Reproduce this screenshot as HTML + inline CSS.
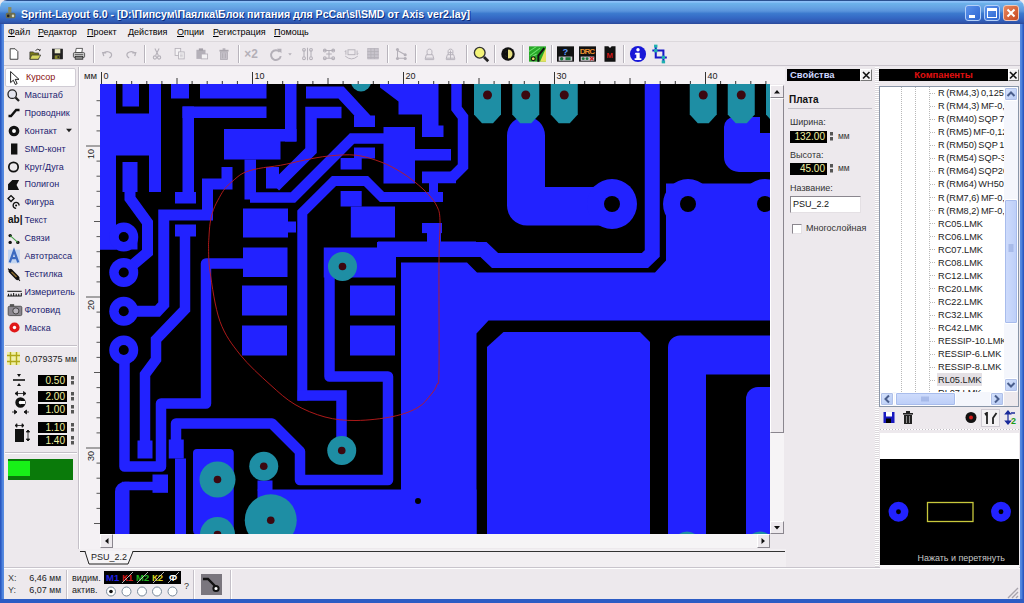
<!DOCTYPE html>
<html lang="ru"><head><meta charset="utf-8"><title>Sprint-Layout 6.0</title>
<style>
*{box-sizing:border-box;margin:0;padding:0}
html,body{width:1024px;height:603px;overflow:hidden;background:#ede9ed;font-family:"Liberation Sans",sans-serif;font-size:9px;line-height:12px;color:#000}
.a{position:absolute}
#title{left:0;top:0;width:1024px;height:24px;background:linear-gradient(#2a5090 0,#2a5090 3%,#8cc0f8 5%,#8cc0f8 9%,#6cb2ea 14%,#66a4e4 30%,#5a94dc 46%,#3c7ace 56%,#3468c4 75%,#3058b0 92%,#2a4898 100%);border-radius:7px 7px 0 0}
#title .t{left:21px;top:8px;color:#fff;font-weight:bold;font-size:10.6px;text-shadow:1px 1px 0 #0a2a7a;white-space:nowrap}
.frame{background:#2c5cc4}
#menu{left:4px;top:24px;width:1016px;height:17px;background:#efecef}
#menu span{position:absolute;top:2px;font-size:9px;white-space:nowrap}
#menu u{text-decoration:underline}
#tb{left:4px;top:41px;width:1016px;height:25px;background:#ede9ed;border-top:1px solid #dcd8dc;border-bottom:1px solid #c9c4cc}
.sep{position:absolute;top:45px;width:2px;height:18px;border-left:1px solid #b8b4bc;border-right:1px solid #fff}
.tool{position:absolute;left:24.500px;font-size:9px;color:#1c1c70;white-space:nowrap}
.ic{position:absolute}
.lbl{position:absolute;font-size:9px;color:#222;white-space:nowrap}
.num{position:absolute;background:#000;color:#f0f0a0;font-size:10px;text-align:right;padding-right:2px;height:11px;line-height:11px}
.row{position:absolute;left:938px;font-size:9.200px;word-spacing:-1px;color:#222;white-space:nowrap;height:13px;line-height:14px}
</style></head><body>
<!-- window frame -->
<div class="a" id="title">
 <svg class="a" style="left:5px;top:7px" width="12" height="13" viewBox="0 0 15 16"><rect x="4" y="0" width="4" height="7" fill="#8a8a5a"/><rect x="1" y="7" width="12" height="7" rx="2" fill="#6d6d4d"/><circle cx="4" cy="11" r="1.6" fill="#222"/><circle cx="10" cy="11" r="1.6" fill="#d8d8c0"/></svg>
 <div class="a t">Sprint-Layout 6.0 - [D:\Пипсум\Паялка\Блок питания для PcCar\sl\SMD от Axis ver2.lay]</div>
 <div class="a" style="left:965px;top:5px;width:16px;height:16px;border:1px solid #b4d0f8;border-radius:3px;background:linear-gradient(135deg,#5a92ec,#2e66d0)"><div class="a" style="left:3px;top:9px;width:6px;height:3px;background:#fff"></div></div>
 <div class="a" style="left:984px;top:5px;width:16px;height:16px;border:1px solid #b4d0f8;border-radius:3px;background:linear-gradient(135deg,#5a92ec,#2e66d0)"><div class="a" style="left:2px;top:2px;width:10px;height:10px;border:1px solid #fff;border-top-width:3px"></div></div>
 <div class="a" style="left:1003px;top:5px;width:16px;height:16px;border:1px solid #f0c8b8;border-radius:3px;background:linear-gradient(135deg,#e8885e,#c84820)"><svg class="a" style="left:2px;top:2px" width="10" height="10"><path d="M1.500 1.500L8.500 8.500M8.500 1.500L1.500 8.500" stroke="#fff" stroke-width="2"/></svg></div>
</div>
<div class="a frame" style="left:0;top:24px;width:4px;height:579px;background:linear-gradient(90deg,#2a58c0 0,#2a58c0 25%,#4a80dc 50%,#5a8ce0 100%)"></div>
<div class="a frame" style="left:1020px;top:24px;width:4px;height:579px;background:linear-gradient(270deg,#2a58c0 0,#2a58c0 25%,#4a80dc 50%,#5a8ce0 100%)"></div>
<div class="a frame" style="left:0;top:599px;width:1024px;height:4px"></div>

<div class="a" id="menu">
 <span style="left:4px"><u>Ф</u>айл</span><span style="left:34px"><u>Р</u>едактор</span><span style="left:83px"><u>П</u>роект</span><span style="left:124px"><u>Д</u>ействия</span><span style="left:173px"><u>О</u>пции</span><span style="left:209px"><u>Р</u>егистрация</span><span style="left:270px"><u>П</u>омощь</span>
</div>
<div class="a" id="tb"></div>
<!-- toolbar separators -->
<div class="sep" style="left:93px"></div><div class="sep" style="left:144px"></div><div class="sep" style="left:238px"></div><div class="sep" style="left:387px"></div><div class="sep" style="left:415px"></div><div class="sep" style="left:466px"></div><div class="sep" style="left:494px"></div><div class="sep" style="left:522px"></div><div class="sep" style="left:551px"></div><div class="sep" style="left:623px"></div>
<!-- toolbar icons -->
<svg class="a" style="left:0;top:41px" width="700" height="25" viewBox="0 41 700 25" font-family="Liberation Sans, sans-serif">
<g transform="translate(14 54) scale(0.7)"><path d="M-5.500 -7.500h7l4 4v11h-11z" fill="#fff" stroke="#222" stroke-width="1.200"/></g>
<g transform="translate(35.5 54) scale(0.7)"><path d="M-8 -3h5l1.500 1.500h6v9h-12.500z" fill="#7a7a18" stroke="#333" stroke-width="1"/><path d="M-5.500 1.500h13l-3.500 6h-12z" fill="#d8d860" stroke="#333" stroke-width="1"/><path d="M0 -5q3.500-4 6.500 0l-1.500 .5M6.500 -5l.3-2" fill="none" stroke="#222" stroke-width="1.200"/></g>
<g transform="translate(57.5 54) scale(0.7)"><rect x="-7" y="-7" width="14" height="14" fill="#222" stroke="#111"/><rect x="-4" y="-7" width="8" height="6" fill="#e8e8c8"/><rect x="-4" y="2" width="7" height="5" fill="#8a8a30"/><rect x="0" y="3" width="2" height="3" fill="#222"/></g>
<g transform="translate(79 54) scale(0.7)"><path d="M-4 -8h9l-1 6h-9z" fill="#fff" stroke="#222"/><rect x="-8" y="-2" width="16" height="7" rx="1.500" fill="#d0d0d0" stroke="#222"/><rect x="-5.500" y="3.500" width="11" height="4" fill="#888" stroke="#222"/><path d="M-6 1h12" stroke="#222"/></g>
<g transform="translate(108 54) scale(0.7)"><path d="M-6 3l-1.500-5 5 .5M-7 -1.500q6-4 11 0q3 4-2 7" fill="none" stroke="#b4b0b8" stroke-width="1.800"/></g>
<g transform="translate(130.5 54) scale(0.7)"><path d="M6 3l1.500-5-5 .5M7 -1.500q-6-4-11 0q-3 4 2 7" fill="none" stroke="#b4b0b8" stroke-width="1.800"/></g>
<g transform="translate(157 54) scale(0.7)"><path d="M-3 -8l5 10M3 -8l-5 10" stroke="#b4b0b8" stroke-width="1.500" fill="none"/><circle cx="-3" cy="5" r="2.300" fill="none" stroke="#b4b0b8" stroke-width="1.500"/><circle cx="3" cy="5" r="2.300" fill="none" stroke="#b4b0b8" stroke-width="1.500"/></g>
<g transform="translate(180 54) scale(0.7)"><rect x="-7" y="-8" width="8" height="10" fill="#f4f2f4" stroke="#b4b0b8" stroke-width="1.200"/><rect x="-2" y="-3" width="8" height="10" fill="#f4f2f4" stroke="#b4b0b8" stroke-width="1.200"/><path d="M0 0h4M0 2h4M0 4h4" stroke="#b4b0b8" stroke-width=".8"/></g>
<g transform="translate(202 54) scale(0.7)"><rect x="-8" y="-6" width="13" height="13" fill="#b4b0b8"/><rect x="-4.500" y="-8" width="6" height="3.500" fill="#a4a0a8"/><rect x="-1" y="0" width="9" height="7" fill="#f4f2f4" stroke="#b4b0b8" stroke-width="1.200"/></g>
<g transform="translate(224 54) scale(0.7)"><rect x="-5" y="-3" width="10" height="11" fill="#c4c0c8" stroke="#aaa6ae"/><rect x="-6.500" y="-6" width="13" height="2.500" fill="#aaa6ae"/><rect x="-2" y="-8" width="4" height="2" fill="#aaa6ae"/><path d="M-2 -1v7M2 -1v7" stroke="#aaa6ae"/></g>
<g transform="translate(252 54) scale(0.7)"><text x="-11" y="6" font-size="17" font-weight="bold" fill="#b4b0b8">×2</text></g>
<g transform="translate(275.5 54) scale(0.7)"><path d="M6 -3a7 7 0 1 0 1.500 6" fill="none" stroke="#b4b0b8" stroke-width="2.800"/><path d="M2 -7.500h6.500v6.500z" fill="#b4b0b8"/></g>
<g transform="translate(290 54) scale(0.7)"><path d="M-2.500 -1h5l-2.500 3z" fill="#b4b0b8"/></g>
<g transform="translate(307.5 54) scale(0.7)"><g stroke="#b4b0b8" fill="none" stroke-width="1.500"><path d="M0 -9v18M-5 -6v10M5 -6v10"/><circle cx="-5" cy="6" r="2"/><circle cx="5" cy="6" r="2"/><circle cx="-5" cy="-6" r="2"/><circle cx="5" cy="-6" r="2"/></g></g>
<g transform="translate(329 54) scale(0.7)"><g stroke="#b4b0b8" fill="none" stroke-width="1.500"><path d="M-7 -5h14M-7 6h14M0 -5v11M-4 0h8"/><circle cx="-6" cy="-5" r="2"/><circle cx="6" cy="-5" r="2"/><circle cx="-6" cy="6" r="2"/><circle cx="6" cy="6" r="2"/></g></g>
<g transform="translate(351.5 54) scale(0.7)"><g stroke="#b4b0b8" fill="none" stroke-width="1.300"><rect x="-5" y="-6" width="10" height="7"/><path d="M-9 3q9 8 18 0M-8 -5v6M8 -5v6M-8 -5l-1.500 2M8 1l1.500-2"/></g></g>
<g transform="translate(373 54) scale(0.7)"><rect x="-7.500" y="-8" width="15" height="15" fill="#c8c4cc" stroke="#b4b0b8"/><path d="M-8 -3.500h16M-8 1h16M-8 5h16M-3 -8v15M2 -8v15" stroke="#b4b0b8" stroke-width="1.200"/></g>
<g transform="translate(401 54) scale(0.7)"><g stroke="#b4b0b8" fill="none" stroke-width="1.500"><path d="M-5 -6v12h11M-5 -5l11 6"/></g><circle cx="-5" cy="-6.500" r="2.200" fill="#b4b0b8"/><circle cx="6" cy="1" r="2.200" fill="#b4b0b8"/><circle cx="-5" cy="6.500" r="2.200" fill="#b4b0b8"/><circle cx="6" cy="6.500" r="2.200" fill="#b4b0b8"/></g>
<g transform="translate(429.5 54) scale(0.7)"><g stroke="#b4b0b8" fill="none" stroke-width="1.300"><path d="M-6 6h12l-1.500-5h-9zM-3 1q-2-8 3-8t3 8M-6 6v2h12v-2"/></g></g>
<g transform="translate(450.5 54) scale(0.7)"><g stroke="#b4b0b8" fill="none" stroke-width="1.300"><path d="M-6 6h12l-1.500-5h-9zM-3 1q-2-8 3-8t3 8M-6 6v2h12v-2M0 -5v12M-3 -2h6"/></g></g>
<g transform="translate(481 54) scale(0.85)"><circle cx="-1.500" cy="-1.500" r="6.300" fill="#f4f478" stroke="#333" stroke-width="1.600"/><path d="M3.500 3.500l5 5" stroke="#222" stroke-width="3.200"/></g>
<g transform="translate(508 54) scale(0.9)"><circle cx="0" cy="0" r="7.500" fill="#111"/><path d="M0 -5a5 5 0 0 1 0 10z" fill="#e8e080"/><circle cx="0" cy="0" r="3.200" fill="#e8e080"/><path d="M0 -3.500a3.500 3.500 0 0 0 0 7z" fill="#111"/></g>
<g transform="translate(537.5 54) scale(0.85)"><rect x="-10" y="-9" width="20" height="18" fill="#28a828"/><path d="M-10 -3l9-6M-9 2l12-9M-6 3l5-3" stroke="#70e070" stroke-width="1.200"/><path d="M3 9h7v-16z" fill="#e8e060"/><path d="M1 9v-7l7-9" stroke="#111" stroke-width="2.400" fill="none"/><circle cx="-5" cy="5.500" r="2.300" fill="#e8e060" stroke="#111" stroke-width="1.200"/></g>
<g transform="translate(565.5 54) scale(0.85)"><rect x="-10" y="-9" width="20" height="18" fill="#111"/><text x="-3.500" y="1" font-size="11" font-weight="bold" fill="#5a9af8">?</text><rect x="-8" y="3" width="16" height="5" fill="#c8c4cc"/><circle cx="-4.500" cy="5.500" r="2" fill="#1a7a3a"/><rect x="0" y="3.800" width="6" height="3.400" fill="#1a7a3a"/></g>
<g transform="translate(587.5 54) scale(0.85)"><rect x="-10" y="-9" width="20" height="18" fill="#111"/><text x="-9" y="0.500" font-size="9.500" font-weight="bold" fill="#e89030" textLength="18">DRC</text><rect x="-8" y="3" width="16" height="5" fill="#c8c4cc"/><circle cx="-5" cy="5.500" r="1.700" fill="#1a7a3a"/><circle cx="-0.500" cy="5.500" r="1.700" fill="#1a7a3a"/><path d="M3 3.500l4 4M7 3.500l-4 4" stroke="#d02020" stroke-width="1.400"/></g>
<g transform="translate(610 54) scale(0.85)"><path d="M-6.500 -9h4.500l2 2l2-2h4.500v18h-13z" fill="#111"/><text x="-4" y="5" font-size="9" font-weight="bold" fill="#d01818">M</text></g>
<g transform="translate(638 54) scale(0.85)"><circle cx="0" cy="0" r="9.500" fill="#1818d8"/><circle cx="0" cy="-5" r="2" fill="#fff"/><path d="M-3 -1.500h5v6.500h2v2h-8v-2h2v-4.500h-2z" fill="#fff"/></g>
<g transform="translate(660 54) scale(0.85)"><path d="M-5 -9v13h13M-9 -4h13v13" fill="none" stroke="#1818c8" stroke-width="2.400"/><rect x="-7" y="-6" width="4" height="4" fill="#20b0b0"/><rect x="2" y="2" width="4" height="4" fill="#20b0b0"/><rect x="-7" y="-11" width="4" height="3.500" fill="#20b0b0"/><rect x="2" y="7.500" width="4" height="3.500" fill="#20b0b0"/></g>
</svg>
<!-- left tool panel -->
<div class="a" style="left:78px;top:67px;width:2px;height:482px;border-left:1px solid #c4c0c8;border-right:1px solid #fff"></div>
<div class="a" style="left:5px;top:68px;width:71px;height:19px;background:#fff;border:1px solid #d0ccd4;border-radius:2px"></div>
<div class="tool" style="top:71px;left:26px;color:#8a1010">Курсор</div>
<div class="tool" style="top:89px">Масштаб</div>
<div class="tool" style="top:107px">Проводник</div>
<div class="tool" style="top:125px">Контакт</div>
<div class="tool" style="top:143px">SMD-конт</div>
<div class="tool" style="top:161px">Круг/Дуга</div>
<div class="tool" style="top:178px">Полигон</div>
<div class="tool" style="top:196px">Фигура</div>
<div class="tool" style="top:214px;left:24.500px">Текст</div>
<div class="tool" style="top:232px;left:24.500px">Связи</div>
<div class="tool" style="top:250px">Автотрасса</div>
<div class="tool" style="top:268px;left:24.500px">Тестилка</div>
<div class="tool" style="top:286px;left:24.500px">Измеритель</div>
<div class="tool" style="top:304px;left:24.500px">Фотовид</div>
<div class="tool" style="top:321.500px;left:24.500px">Маска</div>
<div class="a" style="left:8px;top:214px;font-weight:bold;font-size:10px;color:#111">ab|</div>
<svg class="a" style="left:0;top:66px" width="80" height="275" viewBox="0 66 80 275">
<g transform="translate(14 77.5) scale(0.85)"><path d="M-4 -7v13l3.200-2.800 2.300 5 2.200-1-2.300-5h4.500z" fill="#fff" stroke="#111" stroke-width="1.100"/></g>
<g transform="translate(13.5 95.5) scale(0.85)"><circle cx="-1.500" cy="-1.500" r="5" fill="#e4e4ee" stroke="#222" stroke-width="1.500"/><path d="M2.500 2.500l4 4" stroke="#222" stroke-width="2.600"/></g>
<g transform="translate(14 113) scale(0.85)"><path d="M-6.500 3.500h3l6-7h4" fill="none" stroke="#111" stroke-width="2.800"/></g>
<g transform="translate(14 131) scale(0.85)"><circle cx="0" cy="0" r="4.300" fill="#fff" stroke="#111" stroke-width="4"/></g>
<g transform="translate(69 130.5) scale(0.85)"><path d="M-3.500 -2h7l-3.500 4z" fill="#222"/></g>
<g transform="translate(14 149) scale(0.85)"><rect x="-3.500" y="-6.500" width="7.500" height="13" fill="#111"/></g>
<g transform="translate(13.5 167) scale(0.85)"><circle cx="0" cy="0" r="5.500" fill="none" stroke="#111" stroke-width="2"/></g>
<g transform="translate(14 185) scale(0.85)"><path d="M-7 6v-7l5-5h8l-3 6 3 6z" fill="#111"/></g>
<g transform="translate(14 202) scale(0.85)"><path d="M-7 -4l3.500-3.500 3.500 3.500-3.500 3.500z" fill="none" stroke="#111" stroke-width="1.600"/><path d="M6 4a3.500 3.500 0 1 0-3.500 3.500" fill="none" stroke="#111" stroke-width="1.600"/><circle cx="2.500" cy="4" r="1.200" fill="#111"/></g>
<g transform="translate(14 239) scale(0.85)"><circle cx="-4.500" cy="-4" r="2" fill="#111"/><circle cx="-4.500" cy="4" r="2" fill="#111"/><circle cx="4.500" cy="4" r="2" fill="#111"/><path d="M-4.500 -4l9 8" stroke="#40a040" stroke-width="1.200"/></g>
<g transform="translate(14 256.5) scale(0.85)"><rect x="-7" y="-8" width="14" height="16" fill="#c4d6f0"/><path d="M-5 7l5-14 5 14M-3.500 2h7" fill="none" stroke="#3a6ac0" stroke-width="2.600"/></g>
<g transform="translate(14 274.5) scale(0.85)"><path d="M-7 -7l4 4" stroke="#111" stroke-width="1.400"/><path d="M-4 -4l8 8" stroke="#111" stroke-width="5" stroke-linecap="round"/><path d="M-3 -3l6 6" stroke="#8a6a30" stroke-width="1.800"/><path d="M4 4l3 3.500" stroke="#111" stroke-width="1.200"/></g>
<g transform="translate(14.5 293) scale(0.85)"><path d="M-8.500 -2h17" stroke="#111" stroke-width="1.200"/><path d="M-8.500 3.500h17M-7 1v2.500M-4 1v2.500M-1 0v3.500M2 1v2.500M5 1v2.500M8 0v3.500" stroke="#111" stroke-width="1.200"/></g>
<g transform="translate(15 310.5) scale(0.85)"><rect x="-8" y="-5" width="16" height="11" rx="1.500" fill="#8a868e" stroke="#444"/><rect x="-6" y="-7.500" width="5" height="3" fill="#555"/><circle cx="1" cy="0.500" r="3.600" fill="#b8b4bc" stroke="#333"/></g>
<g transform="translate(14.5 327.5) scale(0.85)"><circle cx="0" cy="0" r="6" fill="#e01818"/><circle cx="0" cy="0" r="2" fill="#fff"/></g>
</svg>
<div class="a" style="left:5px;top:345px;width:72px;height:2px;border-top:1px solid #c4c0c8;border-bottom:1px solid #fff"></div>
<svg class="a" style="left:7px;top:352px" width="13" height="13" viewBox="0 0 13 13"><rect width="13" height="13" fill="#f0f0a8"/><path d="M3.500 0v13M9.500 0v13M0 3.500h13M0 9.500h13" stroke="#b0a818" stroke-width="1.400"/></svg>
<div class="lbl" style="left:25px;top:353px">0,079375 <span style="font-size:8.5px">мм</span></div>
<div class="num" style="left:38px;top:375px;width:29px">0.50</div>
<div class="num" style="left:38px;top:391px;width:29px">2.00</div>
<div class="num" style="left:38px;top:404px;width:29px">1.00</div>
<div class="num" style="left:38px;top:422px;width:29px">1.10</div>
<div class="num" style="left:38px;top:435px;width:29px">1.40</div>
<svg class="a" style="left:0;top:370px" width="80" height="80" viewBox="0 370 80 80">
 <g fill="#555"><rect x="71" y="376" width="3" height="3.500"/><rect x="71" y="381" width="3" height="3.500"/><rect x="71" y="392" width="3" height="3.500"/><rect x="71" y="397" width="3" height="3.500"/><rect x="71" y="405" width="3" height="3.500"/><rect x="71" y="410" width="3" height="3.500"/><rect x="71" y="423" width="3" height="3.500"/><rect x="71" y="428" width="3" height="3.500"/><rect x="71" y="436" width="3" height="3.500"/><rect x="71" y="441" width="3" height="3.500"/></g>
 <path d="M13 380h12" stroke="#111" stroke-width="1.600"/><path d="M17 374h4l-2 3zM17 386h4l-2-3z" fill="#111"/>
 <circle cx="20.500" cy="402.500" r="3.500" fill="#fff" stroke="#111" stroke-width="3.400"/><path d="M20 401h5v3h-5z" fill="#fff"/>
 <path d="M15 393.500h11M15 393.500l2.500-2v4zM26 393.500l-2.500-2v4z" stroke="#111" fill="#111" stroke-width=".8"/>
 <path d="M12 412h5M24 412h5M17 412l-2.500-2v4zM24 412l2.500-2v4z" stroke="#111" fill="#111" stroke-width=".8"/>
 <rect x="15" y="429" width="9" height="13" fill="#111"/><path d="M15 425.500h9M15 425.500l2-1.800v3.600zM24 425.500l-2-1.800v3.600z" stroke="#111" fill="#111" stroke-width=".8"/><path d="M28 430v11M28 430l-1.800 2h3.600zM28 441l-1.800-2h3.600z" stroke="#111" fill="#111" stroke-width=".8"/>
</svg>
<div class="a" style="left:5px;top:452px;width:72px;height:2px;border-top:1px solid #c4c0c8;border-bottom:1px solid #fff"></div>
<div class="a" style="left:8px;top:459px;width:65px;height:21px;background:#0a7a0a"></div>
<div class="a" style="left:8px;top:461px;width:22px;height:15px;background:#18f018"></div>
<!-- rulers -->
<svg class="a" style="left:80px;top:67px" width="705" height="482" viewBox="80 67 705 482" font-family="Liberation Sans, sans-serif" font-size="9" fill="#222">
<rect x="80" y="67" width="705" height="17" fill="#f4f1f4"/><rect x="80" y="67" width="20" height="482" fill="#f4f1f4"/>
<text x="84" y="79" font-size="9.500">мм</text>
<text x="103.5" y="78.500">0</text>
<text x="254.5" y="78.500">10</text>
<text x="405.5" y="78.500">20</text>
<text x="556.5" y="78.500">30</text>
<text x="707.5" y="78.500">40</text>
<text transform="translate(94 149.0) rotate(-90)" text-anchor="end">10</text>
<text transform="translate(94 300.0) rotate(-90)" text-anchor="end">20</text>
<text transform="translate(94 451.0) rotate(-90)" text-anchor="end">30</text>
<path d="M101.5 72v12M116.6 81v3M131.7 81v3M146.8 81v3M161.9 81v3M177.0 78v6M192.1 81v3M207.2 81v3M222.3 81v3M237.4 81v3M252.5 72v12M267.6 81v3M282.7 81v3M297.8 81v3M312.9 81v3M328.0 78v6M343.1 81v3M358.2 81v3M373.3 81v3M388.4 81v3M403.5 72v12M418.6 81v3M433.7 81v3M448.8 81v3M463.9 81v3M479.0 78v6M494.1 81v3M509.2 81v3M524.3 81v3M539.4 81v3M554.5 72v12M569.6 81v3M584.7 81v3M599.8 81v3M614.9 81v3M630.0 78v6M645.1 81v3M660.2 81v3M675.3 81v3M690.4 81v3M705.5 72v12M720.6 81v3M735.7 81v3M750.8 81v3M765.9 81v3" stroke="#333" stroke-width="1" fill="none"/>
<path d="M96.500 100.7h3.500M96.500 115.8h3.500M96.500 130.9h3.500M86 146.0h14M96.500 161.1h3.500M96.500 176.2h3.500M96.500 191.3h3.500M96.500 206.4h3.500M94 221.5h6M96.500 236.6h3.500M96.500 251.7h3.500M96.500 266.8h3.500M96.500 281.9h3.500M86 297.0h14M96.500 312.1h3.500M96.500 327.2h3.500M96.500 342.3h3.500M96.500 357.4h3.500M94 372.5h6M96.500 387.6h3.500M96.500 402.7h3.500M96.500 417.8h3.500M96.500 432.9h3.500M86 448.0h14M96.500 463.1h3.500M96.500 478.2h3.500M96.500 493.3h3.500M96.500 508.4h3.500M94 523.5h6" stroke="#555" stroke-width="1" fill="none"/>
</svg>
<svg class="a" style="left:100px;top:83.500px" width="670" height="450.500" viewBox="100 83.500 670 450.500">
<rect x="100" y="83.500" width="670" height="450.500" fill="#000"/>
<g fill="#2222ff">
<rect x="100" y="83.5" width="16" height="165.5"/>
<rect x="122.5" y="83.5" width="16.5" height="22.5"/>
<rect x="100" y="113" width="61" height="42"/>
<rect x="149" y="83.5" width="12" height="108"/>
<rect x="171" y="83.5" width="18" height="14.5"/>
<rect x="200" y="83.5" width="66.5" height="14.5"/>
<rect x="285" y="83.5" width="11.5" height="57.5"/>
<rect x="280" y="128.5" width="16.5" height="12.5"/>
<path d="M306 92L341 92L366 119" fill="none" stroke="#2222ff" stroke-width="12" stroke-linecap="butt" stroke-linejoin="miter"/>
<rect x="354" y="115" width="21" height="11.5"/>
<rect x="182.5" y="106" width="84" height="11.5"/>
<rect x="182.5" y="106" width="11.5" height="95"/>
<rect x="175" y="191.5" width="21" height="11.5"/>
<rect x="224" y="128.5" width="56.5" height="30.5"/>
<rect x="244.5" y="159" width="11.5" height="40"/>
<path d="M250 197L293 197L352 138L386 138" fill="none" stroke="#2222ff" stroke-width="10.5" stroke-linecap="butt" stroke-linejoin="miter"/>
<path d="M341.5 112L311 112L311 150L275 186" fill="none" stroke="#2222ff" stroke-width="11.5" stroke-linecap="butt" stroke-linejoin="miter"/>
<rect x="266" y="166.5" width="13" height="21.5"/>
<path d="M302.3 400L302.3 212L334 180.5L366 180.5L382 196.5L443 196.5" fill="none" stroke="#2222ff" stroke-width="10" stroke-linecap="butt" stroke-linejoin="miter"/>
<path d="M297.5 395L341.5 395L341.5 450" fill="none" stroke="#2222ff" stroke-width="10.5" stroke-linecap="butt" stroke-linejoin="miter"/>
<path d="M123.75 310.75L157.5 310.75L163.75 304L163.75 214.5L207.5 214.5L207.5 183.5L227 183.5L227 166.5" fill="none" stroke="#2222ff" stroke-width="11" stroke-linecap="butt" stroke-linejoin="miter"/>
<rect x="175" y="224" width="21" height="12"/>
<path d="M185 230L185 309L156 339L156 359L145 374L145 442" fill="none" stroke="#2222ff" stroke-width="10.5" stroke-linecap="butt" stroke-linejoin="miter"/>
<rect x="137.5" y="440" width="15" height="18"/>
<rect x="243" y="208" width="45" height="29"/>
<rect x="288" y="221" width="8" height="11"/>
<rect x="122.5" y="161.5" width="15" height="30"/>
<path d="M130 190L130 198L147.5 222L147.5 252L123.75 272" fill="none" stroke="#2222ff" stroke-width="11" stroke-linecap="butt" stroke-linejoin="miter"/>
<rect x="100" y="234" width="37.5" height="15"/>
<circle cx="123.75" cy="236.5" r="14.5"/>
<circle cx="123.75" cy="272" r="14.5"/>
<circle cx="123.75" cy="310.75" r="14.5"/>
<circle cx="123.75" cy="349.5" r="14.5"/>
<path d="M380 83.5L438.5 83.5L438.5 125L443.5 125L443.5 136.5L422 136.5L422 114L398.5 114L398.5 101L380 87z"/>
<rect x="383.5" y="126.5" width="31.5" height="56.5"/>
<rect x="415" y="148.5" width="36" height="11.5"/>
<rect x="354" y="147" width="21" height="11"/>
<rect x="340.6" y="157.5" width="21.1" height="11.5"/>
<rect x="422" y="171" width="34" height="11.75"/>
<rect x="429" y="182" width="9" height="10"/>
<path d="M456.5 83.5L456.5 108L463 116.5L463 166L451 178" fill="none" stroke="#2222ff" stroke-width="10.5" stroke-linecap="butt" stroke-linejoin="miter"/>
<rect x="350.8" y="206" width="44.2" height="31"/>
<rect x="340.6" y="190.5" width="21.1" height="15.5"/>
<rect x="422" y="222.5" width="20" height="10.1"/>
<rect x="427" y="232" width="14" height="11"/>
<path d="M507 135a19 19 0 0 1 38 0V186.500H612V225H527a20 20 0 0 1-20-20z"/>
<circle cx="612" cy="203.5" r="25"/>
<path d="M377 249L483.5 249L495 260L645 260L652.25 253L652.25 83.5" fill="none" stroke="#2222ff" stroke-width="15" stroke-linecap="butt" stroke-linejoin="miter"/>
<path d="M734 116.500H760V132.500H770V171.500H739a15 15 0 0 1-15-15V126.500a10 10 0 0 1 10-10z"/>
<circle cx="688" cy="203.5" r="25"/>
<circle cx="765" cy="203.5" r="25"/>
<path d="M401 262L467 262L477 272L655 272L666 260L666 183L770 183L770 320L488.5 320L476.5 333L476.5 534L401 534z"/>
<path d="M503.5 331.5L640 331.5L650 341.5L650 534L487 534L487 346.5z"/>
<path d="M668 347a12 12 0 0 1 12-12H770V374H706V534H668z"/>
<path d="M746 398.500a12 12 0 0 1 12-12H770V534H746z"/>
<rect x="323.75" y="247" width="72.25" height="30"/>
<rect x="378" y="241" width="98" height="9"/>
<rect x="350" y="285" width="45" height="30"/>
<rect x="350" y="325" width="45" height="30"/>
<path d="M329.5 270L329.5 376L388 376L388 479.5L300 479.5L300 451L272 423L176 423L176 445" fill="none" stroke="#2222ff" stroke-width="10.5" stroke-linecap="butt" stroke-linejoin="round"/>
<rect x="168.75" y="439" width="15" height="19"/>
<path d="M180.5 458L180.5 534" fill="none" stroke="#2222ff" stroke-width="11" stroke-linecap="butt" stroke-linejoin="miter"/>
<rect x="243" y="247" width="44.5" height="29.5"/>
<rect x="242" y="285" width="45" height="30"/>
<rect x="242" y="325" width="45" height="30"/>
<path d="M124.5 349.5L124.5 466L161 466L161 403L206 403L206 263L244 263" fill="none" stroke="#2222ff" stroke-width="10.5" stroke-linecap="butt" stroke-linejoin="round"/>
<rect x="152.5" y="474" width="15.5" height="18.3"/>
<path d="M160 485.5L122 485.5" fill="none" stroke="#2222ff" stroke-width="8.5" stroke-linecap="butt" stroke-linejoin="round"/>
<path d="M115 491a10 10 0 0 1 10-9.750h4.500V534H115z"/>
<rect x="193" y="448.5" width="40.75" height="85.5" rx="4"/>
<rect x="257.5" y="480" width="15" height="10"/>
<rect x="257.5" y="489" width="219" height="45"/>
</g>
<circle cx="123.75" cy="236.5" r="5" fill="#000"/>
<circle cx="123.75" cy="272" r="5" fill="#000"/>
<circle cx="123.75" cy="310.75" r="5" fill="#000"/>
<circle cx="123.75" cy="349.5" r="5" fill="#000"/>
<circle cx="612" cy="203.5" r="8" fill="#000"/>
<circle cx="688" cy="203.5" r="8" fill="#000"/>
<circle cx="765" cy="203.5" r="8" fill="#000"/>
<circle cx="418" cy="500.5" r="3" fill="#000"/>
<g fill="#1e8ea4">
<circle cx="361" cy="81" r="10" fill="#1e8ea4"/>
<path d="M474 83.5L501 83.5L501 114L493 122.75L482 122.75L474 114z" fill="#1e8ea4"/>
<path d="M512.25 83.5L539.25 83.5L539.25 114L531.25 122.75L520.25 122.75L512.25 114z" fill="#1e8ea4"/>
<path d="M550.75 83.5L577.75 83.5L577.75 114L569.75 122.75L558.75 122.75L550.75 114z" fill="#1e8ea4"/>
<path d="M689.75 83.5L716.75 83.5L716.75 114L708.75 122.75L697.75 122.75L689.75 114z" fill="#1e8ea4"/>
<path d="M727.75 83.5L754.75 83.5L754.75 114L746.75 122.75L735.75 122.75L727.75 114z" fill="#1e8ea4"/>
<path d="M766 83.5L793 83.5L793 114L785 122.75L774 122.75L766 114z" fill="#1e8ea4"/>
<circle cx="342.5" cy="266" r="14.5" fill="#1e8ea4"/>
<circle cx="341.75" cy="450" r="14.5" fill="#1e8ea4"/>
<circle cx="217.5" cy="479" r="18" fill="#1e8ea4"/>
<circle cx="217.5" cy="534" r="17.5" fill="#1e8ea4"/>
<circle cx="263.75" cy="465.75" r="14.5" fill="#1e8ea4"/>
<circle cx="270.75" cy="519.75" r="26" fill="#1e8ea4"/>
<circle cx="687" cy="545" r="14" fill="#1e8ea4"/>
<circle cx="760" cy="545" r="14" fill="#1e8ea4"/>
</g>
<g fill="#3c0810">
<circle cx="487.5" cy="94.5" r="4.5" fill="#3c0810"/>
<circle cx="525.75" cy="94.5" r="4.5" fill="#3c0810"/>
<circle cx="564.25" cy="94.5" r="4.5" fill="#3c0810"/>
<circle cx="703.25" cy="94.5" r="4.5" fill="#3c0810"/>
<circle cx="741.25" cy="94.5" r="4.5" fill="#3c0810"/>
<circle cx="342.5" cy="266" r="3.8" fill="#3c0810"/>
<circle cx="341.75" cy="450" r="3.8" fill="#3c0810"/>
<circle cx="217.5" cy="479" r="3.8" fill="#3c0810"/>
<circle cx="263.75" cy="465.75" r="3.8" fill="#3c0810"/>
<circle cx="270.75" cy="519.75" r="3.8" fill="#3c0810"/>
<circle cx="217.5" cy="534" r="3.8" fill="#3c0810"/>
</g>
<path d="M208.5 243.75C208.8 240.4 209.2 229.2 210.0 223.4C210.8 217.6 211.9 213.4 213.5 209.0C215.1 204.6 217.5 200.4 219.4 196.9C221.3 193.4 222.9 190.6 225.0 188.0C227.1 185.4 229.0 183.8 232.0 181.2C235.0 178.7 238.6 174.9 243.0 172.7C247.4 170.5 252.3 169.3 258.5 168.0C264.7 166.7 272.6 166.2 280.4 164.8C288.2 163.4 297.3 161.0 305.4 159.4C313.5 157.8 320.4 156.3 328.8 155.5C337.2 154.7 347.3 153.7 356.0 154.7C364.7 155.7 373.7 158.8 381.0 161.5C388.3 164.2 394.4 167.7 400.0 171.0C405.6 174.3 410.0 177.7 414.8 181.5C419.5 185.3 424.8 189.9 428.5 194.0C432.2 198.1 435.1 201.7 437.0 206.0C438.9 210.3 439.7 211.0 440.0 220.0C440.3 229.0 439.2 235.0 439.0 260.0C438.8 285.0 439.3 349.3 439.0 370.0C438.7 390.7 438.3 380.0 437.0 384.0C435.7 388.0 434.2 390.2 431.0 394.0C427.8 397.8 424.3 403.3 418.0 407.0C411.7 410.7 403.3 413.8 393.0 416.0C382.7 418.2 367.3 419.9 356.0 420.0C344.7 420.1 335.2 419.2 325.0 416.5C314.8 413.8 304.2 409.4 295.0 404.0C285.8 398.6 279.2 392.3 270.0 384.0C260.8 375.7 248.3 364.5 240.0 354.0C231.7 343.5 225.0 334.8 220.0 321.0C215.0 307.2 211.9 283.9 210.0 271.0C208.1 258.1 208.8 248.3 208.5 243.8" fill="none" stroke="#c01c1c" stroke-width="0.9"/>
</svg>
<!-- scrollbars -->
<div class="a" style="left:770px;top:85px;width:14px;height:449px;background:#f6f4f6"></div>
<div class="a" style="left:770px;top:85px;width:14px;height:13px;background:#ede9ed;border:1px solid #fff;border-right-color:#8a868e;border-bottom-color:#8a868e"></div>
<div class="a" style="left:770px;top:98px;width:14px;height:335px;background:#ede9ed;border:1px solid #fff;border-right-color:#8a868e;border-bottom-color:#8a868e"></div>
<div class="a" style="left:770px;top:521px;width:14px;height:13px;background:#ede9ed;border:1px solid #fff;border-right-color:#8a868e;border-bottom-color:#8a868e"></div>
<div class="a" style="left:100px;top:534px;width:670px;height:14px;background:#f6f4f6"></div>
<div class="a" style="left:100px;top:534px;width:13px;height:14px;background:#ede9ed;border:1px solid #fff;border-right-color:#8a868e;border-bottom-color:#8a868e"></div>
<div class="a" style="left:757px;top:534px;width:13px;height:14px;background:#ede9ed;border:1px solid #fff;border-right-color:#8a868e;border-bottom-color:#8a868e"></div>
<div class="a" style="left:770px;top:534px;width:15px;height:14px;background:#ede9ed"></div>
<svg class="a" style="left:100px;top:85px" width="690" height="465" viewBox="100 85 690 465"><path d="M774 93.500h6l-3-3.500zM774 526h6l-3 3.500zM108.500 538v6l-3.500-3zM761.500 538v6l3.500-3z" fill="#111"/></svg>
<!-- tab strip -->
<div class="a" style="left:80px;top:549px;width:706px;height:19px;background:#f2eff2"></div>
<div class="a" style="left:80px;top:551px;width:705px;height:1px;background:#333"></div>
<svg class="a" style="left:80px;top:549px" width="60" height="17" viewBox="80 549 60 17"><path d="M80 551.500h5l4 12.500h39l5-12.500h7" fill="#f6f4f6" stroke="#222" stroke-width="1"/><path d="M86 551.500h46" stroke="#f6f4f6" stroke-width="1.500"/></svg>
<div class="a" style="left:91px;top:551px;font-size:9px;color:#222">PSU_2.2</div>
<!-- status bar -->
<div class="a" style="left:4px;top:567px;width:1016px;height:2px;border-top:1px solid #c8c4cc;border-bottom:1px solid #fff"></div>
<div class="a" style="left:66px;top:570px;width:2px;height:29px;border-left:1px solid #c4c0c8;border-right:1px solid #fff"></div>
<div class="a" style="left:193px;top:570px;width:2px;height:29px;border-left:1px solid #c4c0c8;border-right:1px solid #fff"></div>
<div class="a" style="left:230px;top:570px;width:2px;height:29px;border-left:1px solid #c4c0c8;border-right:1px solid #fff"></div>
<div class="lbl" style="left:8px;top:572px;color:#444">X:</div><div class="lbl" style="left:8px;top:584px;color:#444">Y:</div>
<div class="lbl" style="left:27px;top:572px;width:34px;text-align:right">6,46 <span style="font-size:8.5px">мм</span></div>
<div class="lbl" style="left:27px;top:584px;width:34px;text-align:right">6,07 <span style="font-size:8.5px">мм</span></div>
<div class="lbl" style="left:72px;top:572px">видим.</div><div class="lbl" style="left:72px;top:584px">актив.</div>
<div class="a" style="left:104px;top:571px;width:77px;height:13px;background:#000"></div>
<svg class="a" style="left:100px;top:570px" width="130" height="30" viewBox="100 570 130 30" font-family="Liberation Sans, sans-serif" font-size="9.500" font-weight="bold">
 <text x="106" y="581" fill="#2020e0">М1</text><text x="122" y="581" fill="#d01818">К1</text><path d="M122 583l11-11" stroke="#ddd" stroke-width=".8"/>
 <text x="136" y="581" fill="#20b020">М2</text><path d="M137 583l11-11" stroke="#ddd" stroke-width=".8"/>
 <text x="152" y="581" fill="#d8d020">К2</text><path d="M153 583l11-11" stroke="#ddd" stroke-width=".8"/>
 <text x="169" y="581" fill="#fff">Ф</text><path d="M168 583l11-11" stroke="#ddd" stroke-width=".8"/>
 <g fill="#fff" stroke="#7a8a9a" stroke-width="1"><circle cx="111" cy="591.500" r="4.500"/><circle cx="126.500" cy="591.500" r="4.500"/><circle cx="142" cy="591.500" r="4.500"/><circle cx="157" cy="591.500" r="4.500"/><circle cx="172.500" cy="591.500" r="4.500"/></g><circle cx="111" cy="591.500" r="1.800" fill="#111"/>
 <text x="184" y="589" font-size="9" font-weight="normal" fill="#333">?</text>
 <rect x="201" y="574" width="21" height="21" fill="#7a767e"/><path d="M203 579h5l8 8" fill="none" stroke="#111" stroke-width="2.400"/><circle cx="216" cy="588.500" r="2.600" fill="#fff" stroke="#111" stroke-width="2"/>
</svg>
<!-- properties panel -->
<div class="a" style="left:787px;top:68.500px;width:73px;height:12.500px;background:#000"></div>
<div class="a" style="left:790px;top:67.500px;font-size:9.400px;font-weight:bold;color:#d0d8ff;line-height:14px">Свойства</div>
<div class="a" style="left:860px;top:68.500px;width:12px;height:12.500px;background:#f4f2f4;border:1px solid #fff;border-right-color:#777;border-bottom-color:#777"></div>
<svg class="a" style="left:862px;top:71px" width="9" height="9"><path d="M1 1l6.500 6.500M7.500 1L1 7.500" stroke="#111" stroke-width="1.600"/></svg>
<div class="a" style="left:789px;top:94px;font-size:10px;font-weight:bold;color:#111">Плата</div>
<div class="a" style="left:788px;top:108px;width:84px;height:1px;background:#c4c0c8"></div>
<div class="lbl" style="left:790px;top:116px;color:#333">Ширина:</div>
<div class="num" style="left:790px;top:130.500px;width:37px;height:12px;line-height:12px">132.00</div>
<div class="lbl" style="left:838px;top:130px;font-size:8.5px;color:#333">мм</div>
<div class="lbl" style="left:790px;top:149px;color:#333">Высота:</div>
<div class="num" style="left:790px;top:162.500px;width:37px;height:12px;line-height:12px">45.00</div>
<div class="lbl" style="left:838px;top:162px;font-size:8.5px;color:#333">мм</div>
<div class="lbl" style="left:790px;top:182px;color:#333">Название:</div>
<div class="a" style="left:790px;top:196px;width:71px;height:17px;background:#fff;border:1px solid #8a868e;border-right-color:#e4e0e4;border-bottom-color:#e4e0e4"></div>
<div class="lbl" style="left:793px;top:198px;color:#111">PSU_2.2</div>
<div class="a" style="left:792px;top:223.500px;width:10px;height:10px;background:#fff;border:1px solid #8a868e;border-right-color:#e4e0e4;border-bottom-color:#e4e0e4"></div>
<div class="lbl" style="left:806px;top:222px;color:#333">Многослойная</div>
<svg class="a" style="left:829px;top:131px" width="6" height="45"><g fill="#555"><rect x="1" y="1" width="3" height="3.500"/><rect x="1" y="6" width="3" height="3.500"/><rect x="1" y="33" width="3" height="3.500"/><rect x="1" y="38" width="3" height="3.500"/></g></svg>
<div class="a" style="left:875px;top:67px;width:4px;height:500px;background:repeating-linear-gradient(#fff 0 1px,#dcd8dc 1px 2px)"></div>
<!-- components panel -->
<div class="a" style="left:879px;top:68.500px;width:129px;height:12.500px;background:#000"></div>
<div class="a" style="left:879px;top:67.500px;width:129px;text-align:center;font-size:9.400px;font-weight:bold;color:#e01010;line-height:14px">Компаненты</div>
<div class="a" style="left:1008px;top:68.500px;width:11px;height:12.500px;background:#f4f2f4;border:1px solid #fff;border-right-color:#777;border-bottom-color:#777"></div>
<svg class="a" style="left:1009px;top:71px" width="9" height="9"><path d="M1 1l6.500 6.500M7.500 1L1 7.500" stroke="#111" stroke-width="1.600"/></svg>
<div class="a" style="left:879px;top:86px;width:140px;height:321px;background:#fff;border:1px solid #8a96a8;overflow:hidden"></div>
<div class="a" style="left:880px;top:87px;width:124px;height:305px;overflow:hidden">
<div class="a" style="left:21px;top:0;width:1px;height:305px;background:repeating-linear-gradient(#b8b8b8 0 1px,#fff 1px 2px)"></div><div class="a" style="left:35px;top:0;width:1px;height:305px;background:repeating-linear-gradient(#b8b8b8 0 1px,#fff 1px 2px)"></div><div class="a" style="left:49px;top:0;width:1px;height:305px;background:repeating-linear-gradient(#b8b8b8 0 1px,#fff 1px 2px)"></div>
<div class="a" style="left:50px;top:5.5px;width:6px;height:1px;background:repeating-linear-gradient(90deg,#b8b8b8 0 1px,#fff 1px 2px)"></div><div class="row" style="left:57px;top:-1.0px;padding:0 1px">R (RM4,3) 0,125W</div>
<div class="a" style="left:50px;top:18.6px;width:6px;height:1px;background:repeating-linear-gradient(90deg,#b8b8b8 0 1px,#fff 1px 2px)"></div><div class="row" style="left:57px;top:12.1px;padding:0 1px">R (RM4,3) MF-0,25</div>
<div class="a" style="left:50px;top:31.6px;width:6px;height:1px;background:repeating-linear-gradient(90deg,#b8b8b8 0 1px,#fff 1px 2px)"></div><div class="row" style="left:57px;top:25.1px;padding:0 1px">R (RM40) SQP 7</div>
<div class="a" style="left:50px;top:44.7px;width:6px;height:1px;background:repeating-linear-gradient(90deg,#b8b8b8 0 1px,#fff 1px 2px)"></div><div class="row" style="left:57px;top:38.2px;padding:0 1px">R (RM5) MF-0,125</div>
<div class="a" style="left:50px;top:57.7px;width:6px;height:1px;background:repeating-linear-gradient(90deg,#b8b8b8 0 1px,#fff 1px 2px)"></div><div class="row" style="left:57px;top:51.2px;padding:0 1px">R (RM50) SQP 10</div>
<div class="a" style="left:50px;top:70.8px;width:6px;height:1px;background:repeating-linear-gradient(90deg,#b8b8b8 0 1px,#fff 1px 2px)"></div><div class="row" style="left:57px;top:64.3px;padding:0 1px">R (RM54) SQP-3</div>
<div class="a" style="left:50px;top:83.9px;width:6px;height:1px;background:repeating-linear-gradient(90deg,#b8b8b8 0 1px,#fff 1px 2px)"></div><div class="row" style="left:57px;top:77.4px;padding:0 1px">R (RM64) SQP20</div>
<div class="a" style="left:50px;top:96.9px;width:6px;height:1px;background:repeating-linear-gradient(90deg,#b8b8b8 0 1px,#fff 1px 2px)"></div><div class="row" style="left:57px;top:90.4px;padding:0 1px">R (RM64) WH50</div>
<div class="a" style="left:50px;top:110.0px;width:6px;height:1px;background:repeating-linear-gradient(90deg,#b8b8b8 0 1px,#fff 1px 2px)"></div><div class="row" style="left:57px;top:103.5px;padding:0 1px">R (RM7,6) MF-0,25</div>
<div class="a" style="left:50px;top:123.0px;width:6px;height:1px;background:repeating-linear-gradient(90deg,#b8b8b8 0 1px,#fff 1px 2px)"></div><div class="row" style="left:57px;top:116.5px;padding:0 1px">R (RM8,2) MF-0,25</div>
<div class="a" style="left:50px;top:136.1px;width:6px;height:1px;background:repeating-linear-gradient(90deg,#b8b8b8 0 1px,#fff 1px 2px)"></div><div class="row" style="left:57px;top:129.6px;padding:0 1px">RC05.LMK</div>
<div class="a" style="left:50px;top:149.2px;width:6px;height:1px;background:repeating-linear-gradient(90deg,#b8b8b8 0 1px,#fff 1px 2px)"></div><div class="row" style="left:57px;top:142.7px;padding:0 1px">RC06.LMK</div>
<div class="a" style="left:50px;top:162.2px;width:6px;height:1px;background:repeating-linear-gradient(90deg,#b8b8b8 0 1px,#fff 1px 2px)"></div><div class="row" style="left:57px;top:155.7px;padding:0 1px">RC07.LMK</div>
<div class="a" style="left:50px;top:175.3px;width:6px;height:1px;background:repeating-linear-gradient(90deg,#b8b8b8 0 1px,#fff 1px 2px)"></div><div class="row" style="left:57px;top:168.8px;padding:0 1px">RC08.LMK</div>
<div class="a" style="left:50px;top:188.3px;width:6px;height:1px;background:repeating-linear-gradient(90deg,#b8b8b8 0 1px,#fff 1px 2px)"></div><div class="row" style="left:57px;top:181.8px;padding:0 1px">RC12.LMK</div>
<div class="a" style="left:50px;top:201.4px;width:6px;height:1px;background:repeating-linear-gradient(90deg,#b8b8b8 0 1px,#fff 1px 2px)"></div><div class="row" style="left:57px;top:194.9px;padding:0 1px">RC20.LMK</div>
<div class="a" style="left:50px;top:214.5px;width:6px;height:1px;background:repeating-linear-gradient(90deg,#b8b8b8 0 1px,#fff 1px 2px)"></div><div class="row" style="left:57px;top:208.0px;padding:0 1px">RC22.LMK</div>
<div class="a" style="left:50px;top:227.5px;width:6px;height:1px;background:repeating-linear-gradient(90deg,#b8b8b8 0 1px,#fff 1px 2px)"></div><div class="row" style="left:57px;top:221.0px;padding:0 1px">RC32.LMK</div>
<div class="a" style="left:50px;top:240.6px;width:6px;height:1px;background:repeating-linear-gradient(90deg,#b8b8b8 0 1px,#fff 1px 2px)"></div><div class="row" style="left:57px;top:234.1px;padding:0 1px">RC42.LMK</div>
<div class="a" style="left:50px;top:253.6px;width:6px;height:1px;background:repeating-linear-gradient(90deg,#b8b8b8 0 1px,#fff 1px 2px)"></div><div class="row" style="left:57px;top:247.1px;padding:0 1px">RESSIP-10.LMK</div>
<div class="a" style="left:50px;top:266.7px;width:6px;height:1px;background:repeating-linear-gradient(90deg,#b8b8b8 0 1px,#fff 1px 2px)"></div><div class="row" style="left:57px;top:260.2px;padding:0 1px">RESSIP-6.LMK</div>
<div class="a" style="left:50px;top:279.8px;width:6px;height:1px;background:repeating-linear-gradient(90deg,#b8b8b8 0 1px,#fff 1px 2px)"></div><div class="row" style="left:57px;top:273.3px;padding:0 1px">RESSIP-8.LMK</div>
<div class="a" style="left:50px;top:292.8px;width:6px;height:1px;background:repeating-linear-gradient(90deg,#b8b8b8 0 1px,#fff 1px 2px)"></div><div class="row" style="left:57px;top:286.3px; background:#e4e0e4;padding:0 1px">RL05.LMK</div>
<div class="a" style="left:50px;top:305.9px;width:6px;height:1px;background:repeating-linear-gradient(90deg,#b8b8b8 0 1px,#fff 1px 2px)"></div><div class="row" style="left:57px;top:299.4px;padding:0 1px">RL07.LMK</div>
</div>
<div class="a" style="left:1004px;top:87px;width:14px;height:305px;background:#f4f6fc"></div>
<div class="a" style="left:1004px;top:87px;width:14px;height:14px;background:linear-gradient(135deg,#d8e4fc,#b4c8f4);border:1px solid #fff;border-radius:2px;box-shadow:0 0 0 1px #b0c0e8 inset"></div>
<div class="a" style="left:1004px;top:378px;width:14px;height:14px;background:linear-gradient(135deg,#d8e4fc,#b4c8f4);border:1px solid #fff;border-radius:2px;box-shadow:0 0 0 1px #b0c0e8 inset"></div>
<div class="a" style="left:1004px;top:199px;width:14px;height:125px;background:linear-gradient(90deg,#cfdcfc,#bccef8);border:1px solid #fff;border-radius:2px;box-shadow:0 0 0 1px #a8bcec inset"></div>
<svg class="a" style="left:1004px;top:87px" width="14" height="305"><path d="M3.500 9l3.500-3.500 3.500 3.500M3.500 296l3.500 3.500 3.500-3.500" fill="none" stroke="#4a5e8c" stroke-width="2"/><path d="M4.500 158h5M4.500 160h5M4.500 162h5M4.500 164h5" stroke="#8aa0d8" stroke-width="1"/></svg>
<div class="a" style="left:880px;top:392px;width:124px;height:14px;background:#f4f6fc"></div>
<div class="a" style="left:880px;top:392px;width:14px;height:14px;background:linear-gradient(135deg,#d8e4fc,#b4c8f4);border:1px solid #fff;border-radius:2px;box-shadow:0 0 0 1px #b0c0e8 inset"></div>
<div class="a" style="left:990px;top:392px;width:14px;height:14px;background:linear-gradient(135deg,#d8e4fc,#b4c8f4);border:1px solid #fff;border-radius:2px;box-shadow:0 0 0 1px #b0c0e8 inset"></div>
<div class="a" style="left:895px;top:392px;width:61px;height:14px;background:linear-gradient(#cfdcfc,#bccef8);border:1px solid #fff;border-radius:2px;box-shadow:0 0 0 1px #a8bcec inset"></div>
<svg class="a" style="left:880px;top:392px" width="124" height="14"><path d="M9 3.500l-3.500 3.500 3.500 3.500M115 3.500l3.500 3.500-3.500 3.500" fill="none" stroke="#4a5e8c" stroke-width="2"/><path d="M42 4.500v5M44 4.500v5M46 4.500v5M48 4.500v5" stroke="#8aa0d8" stroke-width="1"/></svg>
<div class="a" style="left:1004px;top:392px;width:14px;height:14px;background:#ede9ed"></div>
<svg class="a" style="left:879px;top:408px" width="141" height="22" viewBox="879 408 141 22" font-family="Liberation Sans, sans-serif">
<rect x="883.500" y="412" width="11" height="11" fill="#1818c0"/><rect x="886" y="412" width="6" height="4.500" fill="#fff"/><rect x="886" y="418.500" width="5" height="4.500" fill="#000"/>
<rect x="904" y="415" width="8" height="9" fill="#222"/><rect x="903" y="413" width="10" height="1.600" fill="#222"/><rect x="906" y="411" width="4" height="2" fill="#222"/><path d="M906.500 416v7M909.500 416v7" stroke="#aaa" stroke-width=".8"/>
<circle cx="971" cy="417.500" r="5.500" fill="#111"/><circle cx="971" cy="417.500" r="2" fill="#d01818"/>
<rect x="981.500" y="409.500" width="18" height="17" fill="#f4f2f4" stroke="#d0ccd4"/><path d="M987 412v12M993 424v-6l3.500-5M985 413l2 3" fill="none" stroke="#222" stroke-width="1.800"/>
<path d="M1008 412v11M1008 411l-2.500 3h5zM1008 424l-2.500-3h5z" stroke="#1a2a9a" fill="#1a2a9a" stroke-width="1.200"/><text x="1011" y="424" font-size="9" font-weight="bold" fill="#1a9a1a">2</text><path d="M1011 413h4" stroke="#1a2a9a" stroke-width="1.500"/>
</svg>
<div class="a" style="left:880px;top:429px;width:139px;height:1px;background:repeating-linear-gradient(90deg,#c0bcc4 0 1px,#fff 1px 3px)"></div>
<div class="a" style="left:880px;top:433px;width:139px;height:26px;background:#fff"></div>
<div class="a" style="left:880px;top:459px;width:139px;height:106px;background:#000"></div>
<svg class="a" style="left:880px;top:459px" width="139" height="106" viewBox="880 459 139 106" font-family="Liberation Sans, sans-serif"><circle cx="898.500" cy="511.700" r="6.200" fill="none" stroke="#2222ff" stroke-width="7.500"/><circle cx="1001" cy="511.700" r="6.200" fill="none" stroke="#2222ff" stroke-width="7.500"/><rect x="927.500" y="502.500" width="45.500" height="19" fill="none" stroke="#c8c83c" stroke-width="1.300"/><text x="917.500" y="561" font-size="8.950" fill="#c8c8c8">Нажать и перетянуть</text></svg>
<div class="a" style="left:880px;top:565px;width:139px;height:4px;background:#f8f6f8"></div>
<svg class="a" style="left:1006px;top:586px" width="13" height="13"><path d="M12 2L2 12M12 6L6 12M12 10l-2 2" stroke="#a8a4ac" stroke-width="1.400"/></svg>
</body></html>
